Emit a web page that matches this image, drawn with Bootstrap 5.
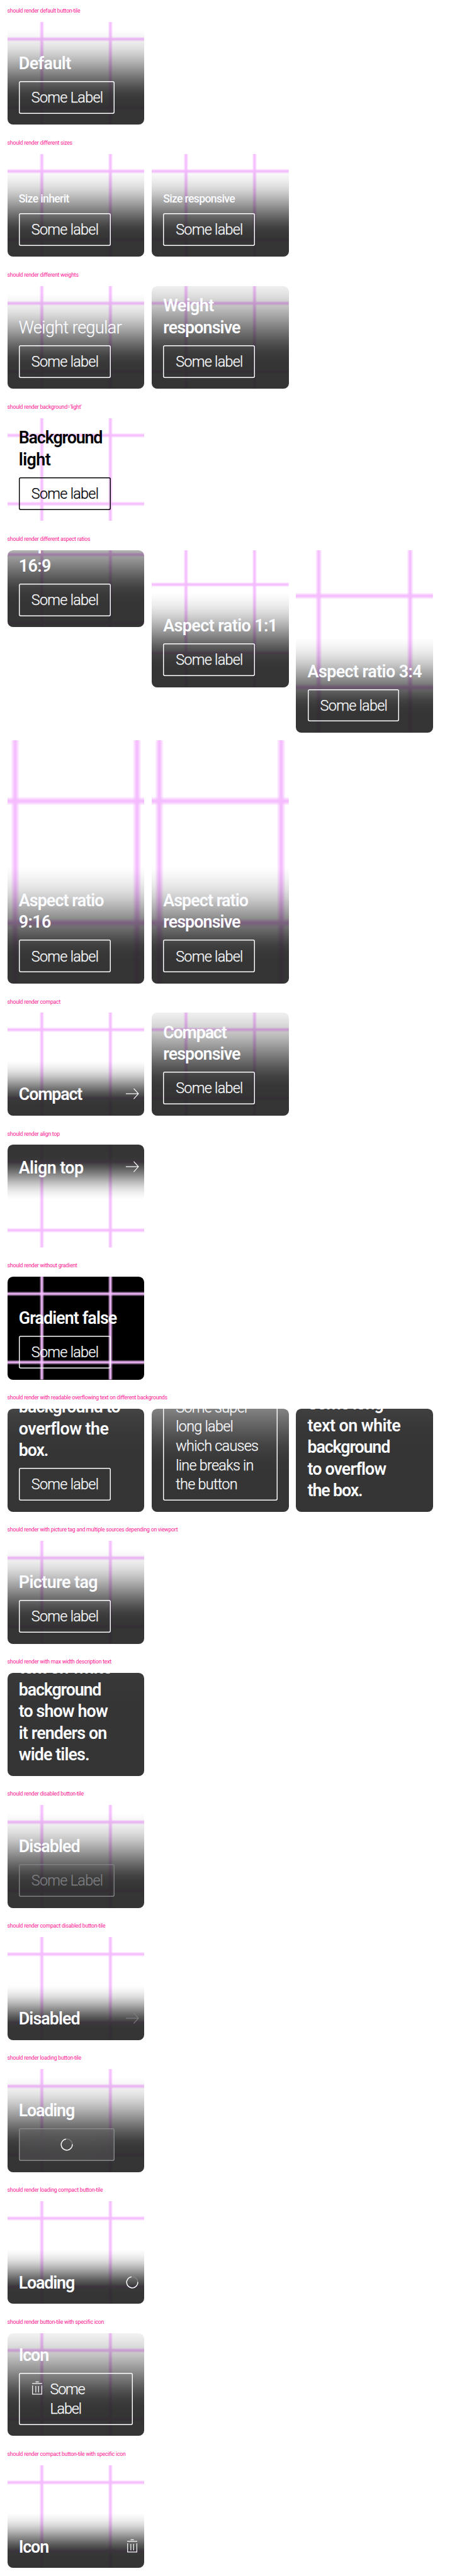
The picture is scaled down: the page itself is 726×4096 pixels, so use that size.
<!DOCTYPE html>
<html lang="en">
<head>
<meta charset="utf-8">
<meta name="viewport" content="width=device-width, initial-scale=1">
<title>Button tile</title>
<link rel="stylesheet" href="https://cdn.jsdelivr.net/npm/bootstrap@5.3.0/dist/css/bootstrap.min.css">
<style>
:root { --u: .726px; --dark: 31, 31, 31; }
body { font-family: Roboto, "Liberation Sans", sans-serif; background: #fff; overflow-x: hidden; }
.spec { padding: calc(16 * var(--u)); }
.caption-line { height: calc(16.15 * var(--u)); margin: 0 0 calc(16 * var(--u)); padding-top: calc(.6 * var(--u)); font-size: calc(12 * var(--u)); line-height: calc(16 * var(--u)); font-weight: 400; letter-spacing: -.027em; color: #ff1493; white-space: nowrap; }
.tiles { gap: calc(16 * var(--u)); }
.tile { width: calc(300 * var(--u)); height: calc(225.08 * var(--u)); border-radius: calc(12 * var(--u)); color: #fbfcff; }
.r16-9 { height: calc(168.75 * var(--u)); }
.r1-1 { height: calc(300 * var(--u)); }
.r3-4 { height: calc(400 * var(--u)); }
.r9-16 { height: calc(533.33 * var(--u)); }
.tile > .pic { position: absolute; inset: 0; width: 100%; height: 100%; }
.foot { position: relative; flex: none; gap: calc(16.6 * var(--u)); padding: calc(48 * var(--u)) calc(25 * var(--u)) calc(24.4 * var(--u));
  background: linear-gradient(to top, rgba(var(--dark), .9) 20%, rgba(var(--dark), .89) 26.67%, rgba(var(--dark), .852) 33.33%, rgba(var(--dark), .768) 40%, rgba(var(--dark), .668) 46.67%, rgba(var(--dark), .557) 53.33%, rgba(var(--dark), .442) 60%, rgba(var(--dark), .332) 66.67%, rgba(var(--dark), .232) 73.33%, rgba(var(--dark), .147) 80%, rgba(var(--dark), .082) 86.67%, rgba(var(--dark), .035) 93.33%, rgba(var(--dark), 0) 100%); }
.foot-top { padding-top: calc(24.4 * var(--u)); padding-bottom: calc(48 * var(--u));
  background: linear-gradient(to bottom, rgba(var(--dark), .9) 20%, rgba(var(--dark), .89) 26.67%, rgba(var(--dark), .852) 33.33%, rgba(var(--dark), .768) 40%, rgba(var(--dark), .668) 46.67%, rgba(var(--dark), .557) 53.33%, rgba(var(--dark), .442) 60%, rgba(var(--dark), .332) 66.67%, rgba(var(--dark), .232) 73.33%, rgba(var(--dark), .147) 80%, rgba(var(--dark), .082) 86.67%, rgba(var(--dark), .035) 93.33%, rgba(var(--dark), 0) 100%); }
.plain .foot { background: none; }
.h-423 { min-height: calc(423 * var(--u)); }
.h-640 { min-height: calc(640 * var(--u)); }
.h-680 { min-height: calc(690 * var(--u)); }
.h-760 { min-height: calc(780 * var(--u)); }
.title { margin: 0; padding-top: calc(2 * var(--u)); margin-bottom: calc(-2 * var(--u)); font-size: calc(37 * var(--u)); line-height: calc(47.4 * var(--u)); font-weight: 600; letter-spacing: -.034em; white-space: nowrap; }
.loose { letter-spacing: -.021em; }
.tight { letter-spacing: -.044em; }
.title-regular { font-weight: 300; letter-spacing: -.018em; -webkit-text-stroke: .25px currentColor; }
.title-small { font-size: calc(24.3 * var(--u)); line-height: calc(32 * var(--u)); font-weight: 500; letter-spacing: -.037em; }
.act { position: relative; align-self: flex-start; width: calc(201 * var(--u)); min-height: calc(71.5 * var(--u)); padding: calc(15.4 * var(--u)) 0 calc(13.8 * var(--u)) calc(27.6 * var(--u)); border: 0; border-radius: calc(4 * var(--u)); background: none; color: inherit; box-shadow: inset 0 0 0 calc(2 * var(--u)) currentColor; font-size: calc(32.2 * var(--u)); font-weight: 300; -webkit-text-stroke: .25px currentColor; line-height: calc(42.2 * var(--u)); letter-spacing: -.03em; text-align: left; white-space: nowrap; }
.act-wide { width: calc(210 * var(--u)); }
.act-full { width: calc(250 * var(--u)); }
.act-icon { letter-spacing: -.05em; gap: calc(9.5 * var(--u)); padding-left: calc(23 * var(--u)); }
.act-icon svg { margin-top: calc(1 * var(--u)); }
.is-disabled { color: #7e7f82; }
.is-loading { color: #88898c; background: rgba(148, 149, 152, .18); backdrop-filter: blur(calc(16 * var(--u))); height: calc(71.5 * var(--u)); padding: 0; }
.ico { width: calc(36 * var(--u)); height: calc(36 * var(--u)); flex: none; fill: none; stroke: currentColor; stroke-width: 1.7; }
.foot > .ico { margin: calc(6 * var(--u)) calc(-16 * var(--u)) 0 0; }
.light { color: #010205; }
</style>
</head>
<body>
<svg class="position-absolute" width="0" height="0" aria-hidden="true">
  <defs>
    <linearGradient id="gv" x1="0" x2="1" y1="0" y2="0"><stop offset="0" stop-color="#f5bbff" stop-opacity="0"/><stop offset=".4" stop-color="#f5bbff" stop-opacity=".9"/><stop offset=".5" stop-color="#f5bbff"/><stop offset=".6" stop-color="#f5bbff" stop-opacity=".9"/><stop offset="1" stop-color="#f5bbff" stop-opacity="0"/></linearGradient>
    <linearGradient id="gh" x1="0" x2="0" y1="0" y2="1"><stop offset="0" stop-color="#f5bbff" stop-opacity="0"/><stop offset=".4" stop-color="#f5bbff" stop-opacity=".9"/><stop offset=".5" stop-color="#f5bbff"/><stop offset=".6" stop-color="#f5bbff" stop-opacity=".9"/><stop offset="1" stop-color="#f5bbff" stop-opacity="0"/></linearGradient>
  </defs>
  <symbol id="grid" viewBox="0 0 300 300" preserveAspectRatio="xMidYMid slice">
    <rect x="69.5" width="11" height="300" fill="url(#gv)"/><rect x="219.5" width="11" height="300" fill="url(#gv)"/>
    <rect y="69.5" width="300" height="11" fill="url(#gh)"/><rect y="219.5" width="300" height="11" fill="url(#gh)"/>
  </symbol>
  <symbol id="arrow" viewBox="0 0 36 36"><path d="M4 18H31.5M21.3 6.6 31.6 18 21.3 29.4"/></symbol>
  <symbol id="trash" viewBox="0 0 36 36"><path d="M14.5 3.2H21.5M7 6.8H29M7.9 11V30.2H28.1V11M15 12.3V26.5M21 12.3V26.5"/></symbol>
  <symbol id="spin" viewBox="0 0 36 36"><circle cx="18" cy="18" r="12.2" stroke="#88898c" stroke-opacity=".85"/><path d="M30.2 17.2A12.2 12.2 0 1 1 16.3 5.9" stroke="#fbfcff" stroke-width="2"/></symbol>
</svg>

<main>
<section class="spec">
  <h2 class="caption-line">should render default button-tile</h2>
  <div class="tiles d-flex flex-wrap align-items-start">
    <article class="tile position-relative overflow-hidden d-flex flex-column justify-content-end"><svg class="pic"><use href="#grid"/></svg>
      <div class="foot d-flex flex-column"><p class="title loose">Default</p><button class="act act-wide">Some Label</button></div></article>
  </div>
</section>

<section class="spec">
  <h2 class="caption-line">should render different sizes</h2>
  <div class="tiles d-flex flex-wrap align-items-start">
    <article class="tile position-relative overflow-hidden d-flex flex-column justify-content-end"><svg class="pic"><use href="#grid"/></svg>
      <div class="foot d-flex flex-column"><p class="title title-small">Size inherit</p><button class="act">Some label</button></div></article>
    <article class="tile position-relative overflow-hidden d-flex flex-column justify-content-end"><svg class="pic"><use href="#grid"/></svg>
      <div class="foot d-flex flex-column"><p class="title title-small">Size responsive</p><button class="act">Some label</button></div></article>
  </div>
</section>

<section class="spec">
  <h2 class="caption-line">should render different weights</h2>
  <div class="tiles d-flex flex-wrap align-items-start">
    <article class="tile position-relative overflow-hidden d-flex flex-column justify-content-end"><svg class="pic"><use href="#grid"/></svg>
      <div class="foot d-flex flex-column"><p class="title title-regular">Weight regular</p><button class="act">Some label</button></div></article>
    <article class="tile position-relative overflow-hidden d-flex flex-column justify-content-end"><svg class="pic"><use href="#grid"/></svg>
      <div class="foot d-flex flex-column"><p class="title"><span class="loose">Weight</span><br>responsive</p><button class="act">Some label</button></div></article>
  </div>
</section>

<section class="spec">
  <h2 class="caption-line">should render background='light'</h2>
  <div class="tiles d-flex flex-wrap align-items-start">
    <article class="tile light plain position-relative overflow-hidden d-flex flex-column justify-content-end"><svg class="pic"><use href="#grid"/></svg>
      <div class="foot d-flex flex-column"><p class="title"><span class="tight">Background</span><br><span class="loose">light</span></p><button class="act">Some label</button></div></article>
  </div>
</section>

<section class="spec">
  <h2 class="caption-line">should render different aspect ratios</h2>
  <div class="tiles d-flex flex-wrap align-items-start">
    <article class="tile r16-9 position-relative overflow-hidden d-flex flex-column justify-content-end"><svg class="pic"><use href="#grid"/></svg>
      <div class="foot d-flex flex-column"><p class="title">Aspect ratio<br><span class="loose">16:9</span></p><button class="act">Some label</button></div></article>
    <article class="tile r1-1 position-relative overflow-hidden d-flex flex-column justify-content-end"><svg class="pic"><use href="#grid"/></svg>
      <div class="foot d-flex flex-column"><p class="title loose">Aspect ratio 1:1</p><button class="act">Some label</button></div></article>
    <article class="tile r3-4 position-relative overflow-hidden d-flex flex-column justify-content-end"><svg class="pic"><use href="#grid"/></svg>
      <div class="foot d-flex flex-column"><p class="title loose">Aspect ratio 3:4</p><button class="act">Some label</button></div></article>
    <article class="tile r9-16 position-relative overflow-hidden d-flex flex-column justify-content-end"><svg class="pic"><use href="#grid"/></svg>
      <div class="foot d-flex flex-column"><p class="title">Aspect ratio<br><span class="loose">9:16</span></p><button class="act">Some label</button></div></article>
    <article class="tile r9-16 position-relative overflow-hidden d-flex flex-column justify-content-end"><svg class="pic"><use href="#grid"/></svg>
      <div class="foot d-flex flex-column"><p class="title">Aspect ratio<br>responsive</p><button class="act">Some label</button></div></article>
  </div>
</section>

<section class="spec">
  <h2 class="caption-line">should render compact</h2>
  <div class="tiles d-flex flex-wrap align-items-start">
    <article class="tile position-relative overflow-hidden d-flex flex-column justify-content-end"><svg class="pic"><use href="#grid"/></svg>
      <div class="foot d-flex justify-content-between align-items-start"><p class="title tight">Compact</p><svg class="ico"><use href="#arrow"/></svg></div></article>
    <article class="tile position-relative overflow-hidden d-flex flex-column justify-content-end"><svg class="pic"><use href="#grid"/></svg>
      <div class="foot d-flex flex-column"><p class="title"><span class="tight">Compact</span><br>responsive</p><button class="act">Some label</button></div></article>
  </div>
</section>

<section class="spec">
  <h2 class="caption-line">should render align top</h2>
  <div class="tiles d-flex flex-wrap align-items-start">
    <article class="tile position-relative overflow-hidden d-flex flex-column"><svg class="pic"><use href="#grid"/></svg>
      <div class="foot foot-top d-flex justify-content-between align-items-start"><p class="title loose">Align top</p><svg class="ico"><use href="#arrow"/></svg></div></article>
  </div>
</section>

<section class="spec">
  <h2 class="caption-line">should render without gradient</h2>
  <div class="tiles d-flex flex-wrap align-items-start">
    <article class="tile plain bg-black position-relative overflow-hidden d-flex flex-column justify-content-end"><svg class="pic"><use href="#grid"/></svg>
      <div class="foot d-flex flex-column"><p class="title">Gradient false</p><button class="act">Some label</button></div></article>
  </div>
</section>

<section class="spec">
  <h2 class="caption-line">should render with readable overflowing text on different backgrounds</h2>
  <div class="tiles d-flex flex-wrap align-items-start">
    <article class="tile position-relative overflow-hidden d-flex flex-column justify-content-end">
      <div class="foot h-640 d-flex flex-column justify-content-end"><p class="title">background to<br><span class="loose">overflow the</span><br><span class="tight">box.</span></p><button class="act">Some label</button></div></article>
    <article class="tile position-relative overflow-hidden d-flex flex-column justify-content-end">
      <div class="foot h-423 d-flex flex-column justify-content-end"><button class="act act-full">Some super<br>long label<br>which causes<br>line breaks in<br>the button</button></div></article>
    <article class="tile position-relative overflow-hidden d-flex flex-column justify-content-end">
      <div class="foot h-680 d-flex flex-column justify-content-end"><p class="title">Some long<br><span class="loose">text on white</span><br><span class="tight">background</span><br>to overflow<br><span class="tight">the box.</span></p></div></article>
  </div>
</section>

<section class="spec">
  <h2 class="caption-line">should render with picture tag and multiple sources depending on viewport</h2>
  <div class="tiles d-flex flex-wrap align-items-start">
    <article class="tile position-relative overflow-hidden d-flex flex-column justify-content-end"><svg class="pic"><use href="#grid"/></svg>
      <div class="foot d-flex flex-column"><p class="title loose">Picture tag</p><button class="act">Some label</button></div></article>
  </div>
</section>

<section class="spec">
  <h2 class="caption-line">should render with max width description text</h2>
  <div class="tiles d-flex flex-wrap align-items-start">
    <article class="tile position-relative overflow-hidden d-flex flex-column justify-content-end">
      <div class="foot h-760 d-flex flex-column justify-content-end"><p class="title"><span class="loose">text on white</span><br><span class="tight">background</span><br>to show how<br>it renders on<br>wide tiles.</p></div></article>
  </div>
</section>

<section class="spec">
  <h2 class="caption-line">should render disabled button-tile</h2>
  <div class="tiles d-flex flex-wrap align-items-start">
    <article class="tile position-relative overflow-hidden d-flex flex-column justify-content-end"><svg class="pic"><use href="#grid"/></svg>
      <div class="foot d-flex flex-column"><p class="title">Disabled</p><button class="act act-wide is-disabled">Some Label</button></div></article>
  </div>
</section>

<section class="spec">
  <h2 class="caption-line">should render compact disabled button-tile</h2>
  <div class="tiles d-flex flex-wrap align-items-start">
    <article class="tile position-relative overflow-hidden d-flex flex-column justify-content-end"><svg class="pic"><use href="#grid"/></svg>
      <div class="foot d-flex justify-content-between align-items-start"><p class="title">Disabled</p><svg class="ico is-disabled"><use href="#arrow"/></svg></div></article>
  </div>
</section>

<section class="spec">
  <h2 class="caption-line">should render loading button-tile</h2>
  <div class="tiles d-flex flex-wrap align-items-start">
    <article class="tile position-relative overflow-hidden d-flex flex-column justify-content-end"><svg class="pic"><use href="#grid"/></svg>
      <div class="foot d-flex flex-column"><p class="title tight">Loading</p><button class="act act-wide is-loading d-flex justify-content-center align-items-center" aria-label="Loading"><svg class="ico"><use href="#spin"/></svg></button></div></article>
  </div>
</section>

<section class="spec">
  <h2 class="caption-line">should render loading compact button-tile</h2>
  <div class="tiles d-flex flex-wrap align-items-start">
    <article class="tile position-relative overflow-hidden d-flex flex-column justify-content-end"><svg class="pic"><use href="#grid"/></svg>
      <div class="foot d-flex justify-content-between align-items-start"><p class="title tight">Loading</p><svg class="ico"><use href="#spin"/></svg></div></article>
  </div>
</section>

<section class="spec">
  <h2 class="caption-line">should render button-tile with specific icon</h2>
  <div class="tiles d-flex flex-wrap align-items-start">
    <article class="tile position-relative overflow-hidden d-flex flex-column justify-content-end"><svg class="pic"><use href="#grid"/></svg>
      <div class="foot d-flex flex-column"><p class="title tight">Icon</p><button class="act act-full act-icon d-flex align-items-start"><svg class="ico"><use href="#trash"/></svg><span>Some<br>Label</span></button></div></article>
  </div>
</section>

<section class="spec">
  <h2 class="caption-line">should render compact button-tile with specific icon</h2>
  <div class="tiles d-flex flex-wrap align-items-start">
    <article class="tile position-relative overflow-hidden d-flex flex-column justify-content-end"><svg class="pic"><use href="#grid"/></svg>
      <div class="foot d-flex justify-content-between align-items-start"><p class="title tight">Icon</p><svg class="ico"><use href="#trash"/></svg></div></article>
  </div>
</section>
</main>
<script src="https://cdn.jsdelivr.net/npm/bootstrap@5.3.0/dist/js/bootstrap.bundle.min.js"></script>
</body>
</html>
